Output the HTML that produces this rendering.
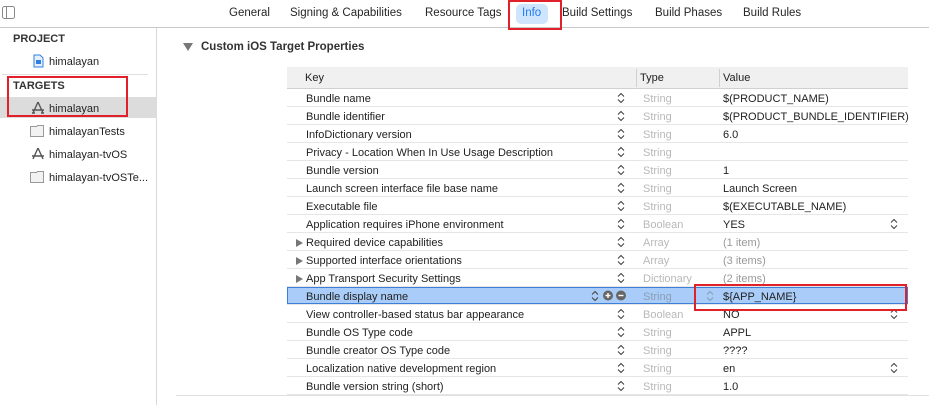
<!DOCTYPE html>
<html><head><meta charset="utf-8"><style>
*{margin:0;padding:0;box-sizing:border-box}
body{width:929px;height:405px;overflow:hidden;background:#fff;font-family:"Liberation Sans",sans-serif;font-size:11px;color:#222;position:relative}
.abs{position:absolute}
.tab{position:absolute;top:7px;font-size:11.5px;color:#262626}
.side{position:absolute;left:0;top:28px;width:157px;height:377px;border-right:1px solid #d8d8d8}
.hd{position:absolute;left:13px;font-weight:bold;font-size:11px;color:#333}
.it{position:absolute;left:49px;font-size:11px;color:#222}
.row{position:absolute;left:287px;width:621px;height:18px;border-bottom:1px solid #e6e6e6}
.row span{position:absolute;top:4px}
.k{left:19px}.t{left:356px;color:#b8b8b8}.v{left:436px}
.ch{position:absolute;left:330px;top:3px;width:8px;height:12px}
.tri{position:absolute;left:9px;top:6px;width:0;height:0;border-left:7px solid #777;border-top:4px solid transparent;border-bottom:4px solid transparent}
.grey{color:#999}
</style></head><body>
<svg class="abs" style="left:2px;top:6px" width="13" height="13"><rect x="0.5" y="0.5" width="12" height="12" rx="2" fill="none" stroke="#888"/><line x1="4.5" y1="1" x2="4.5" y2="12" stroke="#888"/></svg>
<div class="tab" style="left:229px">General</div>
<div class="tab" style="left:290px">Signing &amp; Capabilities</div>
<div class="tab" style="left:425px">Resource Tags</div>
<div class="abs" style="left:516px;top:4px;width:32px;height:20px;background:#cfe4fd;border-radius:5px"></div>
<div class="tab" style="left:522px;color:#1f7df2">Info</div>
<div class="tab" style="left:562px">Build Settings</div>
<div class="tab" style="left:655px">Build Phases</div>
<div class="tab" style="left:743px">Build Rules</div>
<div class="abs" style="left:0;top:27px;width:929px;height:1px;background:#c8c8c8"></div>
<div class="side"></div>
<div class="hd" style="top:33px">PROJECT</div>
<svg class="abs" style="left:33px;top:54px" width="11" height="14"><path d="M1 1h6l3 3v9H1z" fill="#e6f0fb" stroke="#2f7fe0"/><rect x="3" y="6" width="5" height="4" fill="#2f7fe0"/></svg>
<div class="it" style="top:56px">himalayan</div>
<div class="abs" style="left:2px;top:74px;width:146px;height:1px;background:#e0e0e0"></div>
<div class="hd" style="top:80px">TARGETS</div>
<div class="abs" style="left:0;top:97px;width:157px;height:21px;background:#dcdcdc"></div>
<svg class="abs" style="left:31px;top:101px" width="14" height="13"><path d="M7 1L2 12M7 1l5 11M1 9h12M4 12h-3M13 12h-3" stroke="#555" stroke-width="1.4" fill="none"/></svg>
<div class="it" style="top:103px">himalayan</div>
<svg class="abs" style="left:30px;top:124px" width="16" height="13"><path d="M.5 2.5h6l1 -1h6v11h-13z" fill="#f2f2f2" stroke="#999"/></svg>
<div class="it" style="top:126px">himalayanTests</div>
<svg class="abs" style="left:31px;top:147px" width="14" height="13"><path d="M7 1L2 12M7 1l5 11M1 9h12" stroke="#555" stroke-width="1.4" fill="none"/></svg>
<div class="it" style="top:149px">himalayan-tvOS</div>
<svg class="abs" style="left:30px;top:170px" width="16" height="13"><path d="M.5 2.5h6l1 -1h6v11h-13z" fill="#f2f2f2" stroke="#999"/></svg>
<div class="it" style="top:172px">himalayan-tvOSTe...</div>
<div class="abs" style="left:7px;top:76px;width:121px;height:41px;border:2px solid #e0202a"></div>
<div class="abs" style="left:183px;top:43px;width:0;height:0;border-top:8px solid #777;border-left:5px solid transparent;border-right:5px solid transparent"></div>
<div class="abs" style="left:201px;top:41px;font-weight:bold;font-size:11.5px;color:#333">Custom iOS Target Properties</div>
<div class="abs" style="left:287px;top:67px;width:621px;height:22px;background:#f0f0f0;border-bottom:1px solid #d0d0d0"></div>
<div class="abs" style="left:305px;top:72px">Key</div>
<div class="abs" style="left:636px;top:69px;width:1px;height:18px;background:#d0d0d0"></div>
<div class="abs" style="left:640px;top:72px">Type</div>
<div class="abs" style="left:719px;top:69px;width:1px;height:18px;background:#d0d0d0"></div>
<div class="abs" style="left:723px;top:72px">Value</div>
<div id="rows"></div>
<div class="abs" style="left:176px;top:395px;width:753px;height:1px;background:#e0e0e0"></div>
<div class="abs" style="left:508px;top:0;width:54px;height:30px;border:2px solid #e0202a"></div>
<div class="abs" style="left:694px;top:284px;width:213px;height:27px;border:2px solid #e0202a"></div>
<script>
var R=[["Bundle name","String","$(PRODUCT_NAME)"],["Bundle identifier","String","$(PRODUCT_BUNDLE_IDENTIFIER)"],["InfoDictionary version","String","6.0"],["Privacy - Location When In Use Usage Description","String",""],["Bundle version","String","1"],["Launch screen interface file base name","String","Launch Screen"],["Executable file","String","$(EXECUTABLE_NAME)"],["Application requires iPhone environment","Boolean","YES",0,1],["Required device capabilities","Array","(1 item)",1],["Supported interface orientations","Array","(3 items)",1],["App Transport Security Settings","Dictionary","(2 items)",1],["Bundle display name","String","${APP_NAME}",2],["View controller-based status bar appearance","Boolean","NO",0,1],["Bundle OS Type code","String","APPL"],["Bundle creator OS Type code","String","????"],["Localization native development region","String","en",0,1],["Bundle version string (short)","String","1.0"]];
var ch='<svg width="8" height="12"><path d="M1 4.5l3-3 3 3M1 7.5l3 3 3-3" stroke="#444" stroke-width="1.1" fill="none"/></svg>';
var h='';
R.forEach(function(r,i){
var top=89+i*18,sel=r[3]==2;
h+='<div class="row" style="top:'+top+'px;'+(sel?'background:#a9cdf8;box-shadow:inset 0 0 0 1px #3d7fd6;':'')+'">';
if(r[3]==1)h+='<div class="tri"></div>';
h+='<span class="k">'+r[0]+'</span>';
if(sel){h+='<div class="ch" style="left:304px">'+ch+'</div><svg style="position:absolute;left:316px;top:3px" width="24" height="11"><circle cx="5" cy="5.5" r="5" fill="#666"/><path d="M2.5 5.5h5M5 3v5" stroke="#fff" stroke-width="1.4"/><circle cx="18" cy="5.5" r="5" fill="#666"/><path d="M15.5 5.5h5" stroke="#fff" stroke-width="1.4"/></svg>';
h+='<div class="ch" style="left:419px;opacity:.35">'+ch+'</div>';}
else h+='<div class="ch">'+ch+'</div>';
h+='<span class="t"'+(sel?' style="color:#8a9db5"':'')+'>'+r[1]+'</span><span class="v'+(r[3]==1?' grey':'')+'">'+r[2]+'</span>';
if(r[4])h+='<div class="ch" style="left:603px">'+ch+'</div>';
h+='</div>';});
document.getElementById('rows').innerHTML=h;
</script>
</body></html>
